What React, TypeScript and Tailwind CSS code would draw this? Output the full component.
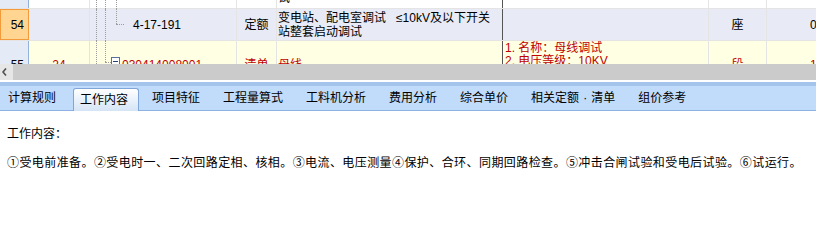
import React from 'react';

const FONT = "font-['Liberation_Sans','Noto_Sans_CJK_SC',sans-serif]";
const RED = 'text-[#c00000]';

const tabs = ['计算规则', '工作内容', '项目特征', '工程量算式', '工料机分析', '费用分析', '综合单价', '相关定额·清单', '组价参考'];

function Dotted({ className }: { className: string }) {
  return <div className={`absolute border-dotted border-[#9c9c9c] ${className}`} />;
}

function RowHeader({ label, selected }: { label?: string; selected?: boolean }) {
  return (
    <div
      className={`w-[29px] shrink-0 flex items-center justify-end pr-[4px] ${
        selected ? 'bg-[#ffd591] border border-[#f39a3b]' : 'bg-[#e4eaf6] border-r border-[#93b2da]'
      }`}
    >
      {label}
    </div>
  );
}

function TabLabel({ text }: { text: string }) {
  if (!text.includes('·')) return <>{text}</>;
  const [a, b] = text.split('·');
  return (
    <>
      {a}
      <span className="inline-block w-[12px] text-center">·</span>
      {b}
    </>
  );
}

export default function App() {
  return (
    <div className={`w-[816px] h-[243px] overflow-hidden bg-white text-[12px] text-black ${FONT}`}>
      {/* Grid */}
      <div className="h-[64px] overflow-hidden">
        {/* clipped row above */}
        <div className="flex h-[30px] mt-[-21px] border-b border-[#e4e4e4] bg-white">
          <RowHeader />
          <div className="w-[61px] shrink-0 border-r border-[#e4e4e4]" />
          <div className="w-[147px] shrink-0 border-r border-[#e4e4e4] relative">
            <Dotted className="left-[6px] top-0 bottom-[-1px] border-l" />
            <Dotted className="left-[15px] top-0 bottom-[-1px] border-l" />
            <Dotted className="left-[26px] top-0 bottom-[-1px] border-l" />
          </div>
          <div className="w-[40px] shrink-0 border-r border-[#e4e4e4]" />
          <div className="w-[226px] shrink-0 border-r border-[#555] flex items-end pl-[1px]">
            <div className="leading-[14px] pb-[3px]">试</div>
          </div>
          <div className="w-[206px] shrink-0 border-r border-[#e4e4e4]" />
          <div className="w-[58px] shrink-0 border-r border-[#e4e4e4]" />
          <div className="flex-1" />
        </div>

        {/* row 54 */}
        <div className="flex h-[32px] border-b border-[#e4e4e4] bg-[#e8ebf5]">
          <RowHeader label="54" selected />
          <div className="w-[61px] shrink-0 border-r border-[#e4e4e4]" />
          <div className="w-[147px] shrink-0 border-r border-[#e4e4e4] relative flex items-center pl-[43px]">
            <Dotted className="left-[6px] top-0 bottom-[-1px] border-l" />
            <Dotted className="left-[15px] top-0 bottom-[-1px] border-l" />
            <Dotted className="left-[26px] top-0 h-[15px] border-l" />
            <Dotted className="left-[26px] top-[15px] w-[8px] border-t" />
            <span>4-17-191</span>
          </div>
          <div className="w-[40px] shrink-0 border-r border-[#e4e4e4] flex items-center justify-center">定额</div>
          <div className="w-[226px] shrink-0 border-r border-[#555] flex items-center pl-[1px] leading-[14px]">
            <div>
              变电站、配电室调试&nbsp;&nbsp;&nbsp;≤10kV及以下开关
              <br />
              站整套启动调试
            </div>
          </div>
          <div className="w-[206px] shrink-0 border-r border-[#e4e4e4]" />
          <div className="w-[58px] shrink-0 border-r border-[#e4e4e4] flex items-center justify-center">座</div>
          <div className="flex-1 flex items-center pl-[43px]">0</div>
        </div>

        {/* row 55 */}
        <div className={`flex h-[48px] border-b border-[#e4e4e4] bg-[#ffffe4] ${RED}`}>
          <div className="w-[29px] shrink-0 flex items-center justify-end pr-[4px] bg-[#e4eaf6] border-r border-[#93b2da] text-black">
            55
          </div>
          <div className="w-[61px] shrink-0 border-r border-[#e4e4e4] flex items-center justify-center">24</div>
          <div className="w-[147px] shrink-0 border-r border-[#e4e4e4] relative flex items-center pl-[32px]">
            <Dotted className="left-[6px] top-0 bottom-0 border-l" />
            <Dotted className="left-[15px] top-0 h-[21px] border-l" />
            <Dotted className="left-[15px] top-[21px] w-[6px] border-t" />
            <div className="absolute left-[21px] top-[16px] w-[9px] h-[9px] border border-[#5b6f9c] bg-white flex items-center justify-center">
              <div className="w-[5px] h-px bg-[#2a3f74]" />
            </div>
            <span>030414008001</span>
          </div>
          <div className="w-[40px] shrink-0 border-r border-[#e4e4e4] flex items-center justify-center">清单</div>
          <div className="w-[226px] shrink-0 border-r border-[#555] flex items-center pl-[1px]">母线</div>
          <div className="w-[206px] shrink-0 border-r border-[#e4e4e4] pl-[2px] pt-[1px] leading-[13px]">
            1. 名称：母线调试
            <br />
            2. 电压等级：10KV
          </div>
          <div className="w-[58px] shrink-0 border-r border-[#e4e4e4] flex items-center justify-center">段</div>
          <div className="flex-1 flex items-center pl-[43px]">1</div>
        </div>
      </div>

      {/* horizontal scrollbar */}
      <div className="h-[16px] bg-[#cbcbcb] flex">
        <div className="w-[13px] bg-[#e6e6e6] flex items-center pl-[2px]">
          <svg width="5" height="8" viewBox="0 0 5 8">
            <path d="M4 0.5 L1 4 L4 7.5" stroke="#505050" strokeWidth="1.6" fill="none" />
          </svg>
        </div>
      </div>

      <div className="h-[2px] bg-white" />
      <div className="h-[4px] bg-[#a5c4ec]" />

      {/* tabs */}
      <div className="h-[25px] bg-[#c1dbfa] border-b border-[#8db2e2] flex pl-[2px] gap-[11px]">
        {tabs.map((t, i) =>
          i === 1 ? (
            <div
              key={t}
              className="mt-[2px] mb-[-1px] pl-[6px] pr-[10px] mr-[-4px] flex items-center rounded-t-[3px] border border-b-0 border-[#7ea6d8] bg-linear-to-b from-white to-[#d5e4f6]"
            >
              <TabLabel text={t} />
            </div>
          ) : (
            <div key={t} className="px-[6px] flex items-center whitespace-nowrap">
              <TabLabel text={t} />
            </div>
          ),
        )}
      </div>

      {/* content */}
      <div className="pl-[7px] pt-[15px] leading-[16px]">
        <div>工作内容：</div>
        <div className="mt-[13px] whitespace-nowrap tracking-[0.42px]">
          ①受电前准备。②受电时一、二次回路定相、核相。③电流、电压测量④保护、合环、同期回路检查。⑤冲击合闸试验和受电后试验。⑥试运行。
        </div>
      </div>
    </div>
  );
}
